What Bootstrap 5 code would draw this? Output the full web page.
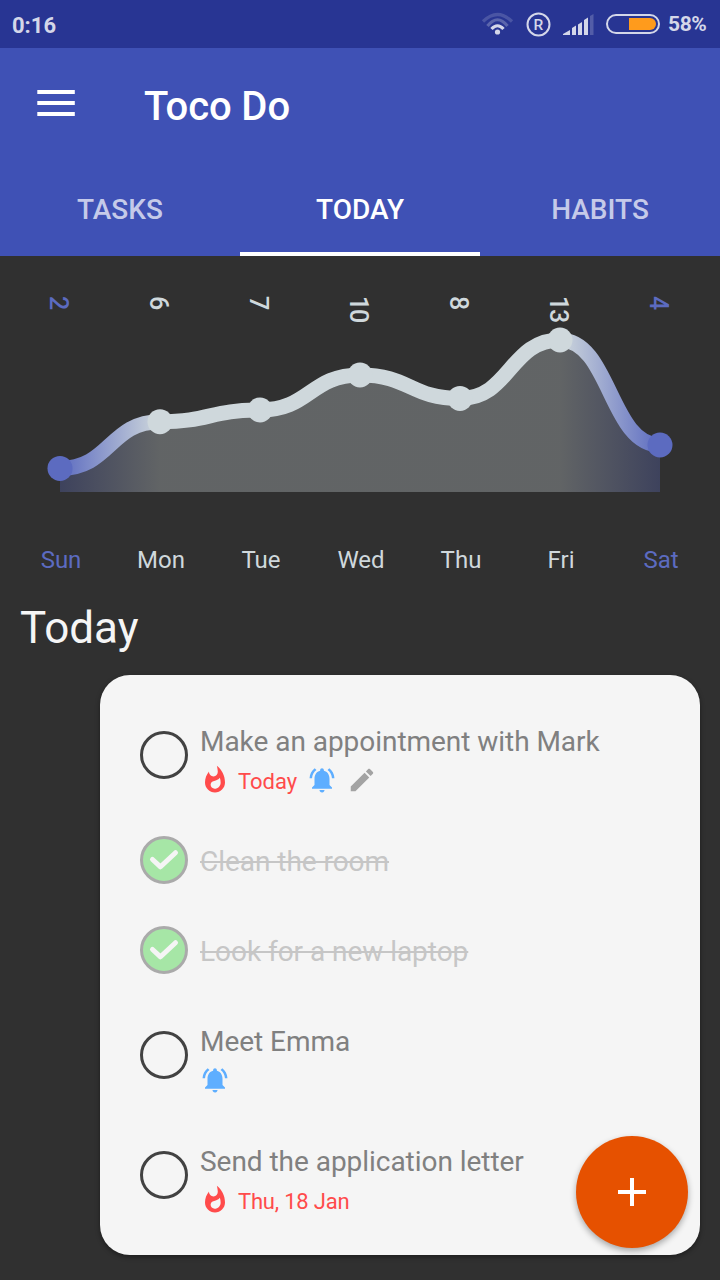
<!DOCTYPE html>
<html lang="en">
<head>
<meta charset="utf-8">
<meta name="viewport" content="width=device-width, initial-scale=1">
<title>Toco Do</title>
<link href="https://cdn.jsdelivr.net/npm/bootstrap@5.3.0/dist/css/bootstrap.min.css" rel="stylesheet">
<style>
  body { font-family: Roboto, "Noto Sans", sans-serif; background: #303030; color: #fff; width: 720px; height: 1280px; overflow: hidden; }
  svg { display: block; flex: none; }
  .status { height: 48px; background: #283593; color: #d4d7e9; font-size: 22px; font-weight: 700; padding: 2px 13px 0 12px; }
  .status .level { width: 39px; font-size: 21px; letter-spacing: -.4px; white-space: nowrap; }
  .status svg { margin-right: 6px; margin-top: -2px; }
  .appbar { height: 112px; background: #3f51b5; padding-left: 37px; }
  .appbar h1 { font-size: 40px; font-weight: 500; line-height: 48px; letter-spacing: -.1px; margin: 6px 0 0 69px; }
  .menu-btn { margin-top: -2px; }
  .tabs { height: 96px; background: #3f51b5; }
  .tabs .nav-link { height: 96px; line-height: 92px; padding: 4px 0 0; border-radius: 0; font-size: 28px; font-weight: 500; color: #c5cae9; border-bottom: 4px solid transparent; }
  .tabs .nav-link.active { color: #fff; border-bottom-color: #fff; }
  .week { padding: 0 10px; color: #cfd8dc; }
  .week > div { flex: 1 1 0; }
  .counts { height: 70px; padding: 40px 12px 0 8px; font-size: 25px; font-weight: 500; line-height: 26px; }
  .counts span { writing-mode: vertical-rl; letter-spacing: -1.2px; }
  .days { height: 40px; margin-top: 44px; padding: 0 9px 0 11px; font-size: 24px; line-height: 40px; text-align: center; }
  .week .weekend { color: #5c6bc0; }
  .day-title { font-size: 44px; font-weight: 400; line-height: 56px; margin: 20px 0 0 20px; color: #f5f5f5; }
  .task-card { width: 600px; height: 580px; margin: 19px 0 0 100px; padding: 20px 40px; border: 0; border-radius: 30px; background: #f5f5f5; box-shadow: 0 2px 5px rgba(0,0,0,.4); color: #808080; }
  .task { height: 90px; gap: 12px; }
  .task.tall { height: 120px; }
  .task-text { padding-top: 27px; font-size: 28px; line-height: 40px; letter-spacing: -.04px; }
  .ring { width: 48px; height: 48px; border: 3px solid #424242; border-radius: 50%; flex: none; align-self: center; }
  .done .ring { border-color: #aaa; background: #a6e6a6; }
  .done .task-text { color: #c6c6c6; text-decoration: line-through; text-decoration-thickness: 2px; }
  .meta { height: 30px; margin-top: 3px; font-size: 22px; line-height: 30px; letter-spacing: 0; color: #ff4b4b; }
  .meta .due { margin: 2px 10px 0 8px; }
  .meta .date { letter-spacing: -.2px; }
  .meta .edit { margin-left: 10px; }
  .fab { right: 32px; bottom: 32px; width: 112px; height: 112px; border-radius: 50%; border: 0; background: #e65100; box-shadow: 0 3px 6px rgba(0,0,0,.32); padding: 0; }
</style>
</head>
<body>
<svg width="0" height="0" class="position-absolute">
  <symbol id="flame" viewBox="0 0 24 24"><path fill="#ff4b4b" d="M13.5.67s.74 2.65.74 4.8c0 2.06-1.35 3.73-3.41 3.73-2.07 0-3.63-1.67-3.63-3.73l.03-.36C5.21 7.51 4 10.62 4 14c0 4.42 3.58 8 8 8s8-3.58 8-8C20 8.61 17.41 3.8 13.5.67zM11.71 19c-1.78 0-3.22-1.4-3.22-3.14 0-1.62 1.05-2.76 2.81-3.12 1.77-.36 3.6-1.21 4.62-2.58.39 1.29.59 2.65.59 4.04 0 2.65-2.15 4.8-4.8 4.8z"/></symbol>
  <symbol id="bell" viewBox="0 0 24 24"><path fill="#5eaeff" d="M7.58 4.08L6.15 2.65C3.75 4.48 2.17 7.3 2.03 10.5h2c.15-2.65 1.51-4.97 3.55-6.42zm12.39 6.42h2c-.15-3.2-1.73-6.02-4.12-7.85l-1.42 1.43c2.02 1.45 3.39 3.77 3.54 6.42zM18 11c0-3.07-1.64-5.64-4.5-6.32V4c0-.83-.67-1.5-1.5-1.5s-1.5.67-1.5 1.5v.68C7.63 5.36 6 7.92 6 11v5l-2 2v1h16v-1l-2-2v-5zm-6 11c.14 0 .27-.01.4-.04.65-.14 1.18-.58 1.44-1.18.1-.24.15-.5.15-.78h-4c.01 1.1.9 2 2.01 2z"/></symbol>
  <symbol id="pencil" viewBox="0 0 24 24"><path fill="#a3a3a3" d="M3 17.25V21h3.75L17.81 9.94l-3.75-3.75L3 17.25zM20.71 7.04c.39-.39.39-1.02 0-1.41l-2.34-2.34c-.39-.39-1.02-.39-1.41 0l-1.83 1.83 3.75 3.75 1.83-1.83z"/></symbol>
  <symbol id="tick" viewBox="0 0 42 42"><path d="M9.500 20.500l8 7.300L32.500 13.700" fill="none" stroke="#f5f5f5" stroke-width="5" stroke-linecap="round" stroke-linejoin="round"/></symbol>
</svg>

<div class="status d-flex align-items-center justify-content-between">
  <span>0:16</span>
  <div class="d-flex align-items-center">
    <svg width="182" height="48" viewBox="480 0 182 48">
      <g fill="none" stroke="#d4d7e9" stroke-width="3.200">
        <path d="M483 21.500q14.500-14 29 0" opacity=".2"/>
        <path d="M487.500 26q10-12.500 20 0" opacity=".3"/>
        <path d="M491.500 29q6-6.500 12 0"/>
      </g>
      <circle cx="497.500" cy="32" r="2.600" fill="#d4d7e9"/>
      <circle cx="538.500" cy="24.500" r="11" fill="none" stroke="#d4d7e9" stroke-width="2"/>
      <text x="538.500" y="30" font-size="15.500" font-weight="500" fill="#d4d7e9" text-anchor="middle">R</text>
      <g fill="#d4d7e9">
        <path d="M563 35v-1l7-4v5zM572 35v-7l4-2.500V35zM578 35V24.500l4-2.500v13zM584 35V20l4-2.500V35z"/>
        <path d="M590 35V16l3.500-2v21z" opacity=".25"/>
      </g>
      <rect x="607" y="15" width="52" height="18" rx="9" fill="none" stroke="#d4d7e9" stroke-width="2"/>
      <path d="M629 18h21a6 6 0 0 1 0 12h-21z" fill="#ff9b1c"/>
    </svg>
    <span class="level">58%</span>
  </div>
</div>

<header class="appbar d-flex align-items-center">
  <svg class="menu-btn" width="38" height="26" viewBox="0 0 38 26"><path d="M0.300 2h37.500M0.300 13h37.500M0.300 24h37.500" stroke="#fff" stroke-width="4"/></svg>
  <h1>Toco Do</h1>
</header>

<nav class="tabs nav nav-fill flex-nowrap">
  <a class="nav-link w-100" href="#">TASKS</a>
  <a class="nav-link w-100 active" href="#">TODAY</a>
  <a class="nav-link w-100" href="#">HABITS</a>
</nav>

<section>
  <div class="week counts d-flex">
    <div class="d-flex justify-content-center weekend"><span>2</span></div>
    <div class="d-flex justify-content-center"><span>6</span></div>
    <div class="d-flex justify-content-center"><span>7</span></div>
    <div class="d-flex justify-content-center"><span>10</span></div>
    <div class="d-flex justify-content-center"><span>8</span></div>
    <div class="d-flex justify-content-center"><span>13</span></div>
    <div class="d-flex justify-content-center weekend"><span>4</span></div>
  </div>
  <svg width="720" height="170" viewBox="0 326 720 170">
    <defs>
      <linearGradient id="ramp" gradientUnits="userSpaceOnUse" x1="60" x2="660" y1="0" y2="0">
        <stop offset="0" stop-color="#5c6bc0"/><stop offset=".16667" stop-color="#cfd8dc"/>
        <stop offset=".83333" stop-color="#cfd8dc"/><stop offset="1" stop-color="#5c6bc0"/>
      </linearGradient>
    </defs>
    <path fill="url(#ramp)" fill-opacity=".31" d="M60 468.400C110 468.400 110 421.700 160 421.700S210 410 260 410S310 375 360 375S410 398.400 460 398.400S510 340 560 340S610 445 660 445V492H60z"/>
    <path fill="none" stroke="url(#ramp)" stroke-width="15" d="M60 468.400C110 468.400 110 421.700 160 421.700S210 410 260 410S310 375 360 375S410 398.400 460 398.400S510 340 560 340S610 445 660 445"/>
    <g fill="#cfd8dc">
      <circle cx="160" cy="421.700" r="12.500"/><circle cx="260" cy="410" r="12.500"/><circle cx="360" cy="375" r="12.500"/>
      <circle cx="460" cy="398.400" r="12.500"/><circle cx="560" cy="340" r="12.500"/>
    </g>
    <g fill="#5c6bc0"><circle cx="60" cy="468.400" r="12.500"/><circle cx="660" cy="445" r="12.500"/></g>
  </svg>
  <div class="week days d-flex">
    <div class="weekend">Sun</div><div>Mon</div><div>Tue</div><div>Wed</div><div>Thu</div><div>Fri</div><div class="weekend">Sat</div>
  </div>
</section>

<h2 class="day-title">Today</h2>

<main class="task-card card">
  <div class="task tall d-flex">
    <div class="ring"></div>
    <div class="task-text">Make an appointment with Mark
      <div class="meta d-flex">
        <svg width="30" height="30"><use href="#flame"/></svg>
        <span class="due">Today</span>
        <svg width="30" height="30"><use href="#bell"/></svg>
        <svg class="edit" width="30" height="30"><use href="#pencil"/></svg>
      </div>
    </div>
  </div>
  <div class="task done d-flex">
    <div class="ring"><svg width="42" height="42"><use href="#tick"/></svg></div>
    <div class="task-text">Clean the room</div>
  </div>
  <div class="task done d-flex">
    <div class="ring"><svg width="42" height="42"><use href="#tick"/></svg></div>
    <div class="task-text">Look for a new laptop</div>
  </div>
  <div class="task tall d-flex">
    <div class="ring"></div>
    <div class="task-text">Meet Emma
      <div class="meta d-flex"><svg width="30" height="30"><use href="#bell"/></svg></div>
    </div>
  </div>
  <div class="task tall d-flex">
    <div class="ring"></div>
    <div class="task-text">Send the application letter
      <div class="meta d-flex"><svg width="30" height="30"><use href="#flame"/></svg><span class="due date">Thu, 18 Jan</span></div>
    </div>
  </div>
</main>

<button class="fab btn position-fixed d-flex align-items-center justify-content-center" aria-label="Add task">
  <svg width="28" height="28" viewBox="0 0 28 28"><path d="M14 0v28M0 14h28" stroke="#fff" stroke-width="4"/></svg>
</button>
<script src="https://cdn.jsdelivr.net/npm/bootstrap@5.3.0/dist/js/bootstrap.bundle.min.js"></script>
</body>
</html>
